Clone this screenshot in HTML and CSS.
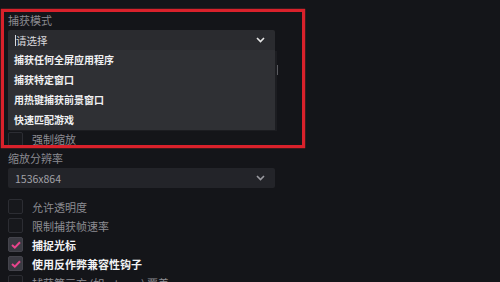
FILE: index.html
```html
<!DOCTYPE html>
<html lang="zh-CN">
<head>
<meta charset="utf-8">
<link rel="stylesheet" href="styles.css">
</head>
<body>
<div class="page">
  <div class="field-label">捕获模式</div>
  <div class="select select-open">
    <span class="select-text"><span class="caret"></span>请选择</span>
    <svg class="chev" width="9" height="6" viewBox="0 0 9 6"><path d="M1 1l3.5 3.5L8 1" fill="none" stroke="#e6e6e6" stroke-width="1.6"/></svg>
  </div>
  <div class="hidden-area"><span class="scroll-tick"></span></div>
  <div class="check-row">
    <span class="box"></span><span class="check-text">强制缩放</span>
  </div>
  <div class="field-label">缩放分辨率</div>
  <div class="select">
    <span class="select-text dim">1536x864</span>
    <svg class="chev" width="9" height="6" viewBox="0 0 9 6"><path d="M1 1l3.5 3.5L8 1" fill="none" stroke="#9a9aa0" stroke-width="1.6"/></svg>
  </div>
  <div class="checks">
    <div class="check-row"><span class="box"></span><span class="check-text">允许透明度</span></div>
    <div class="check-row"><span class="box"></span><span class="check-text">限制捕获帧速率</span></div>
    <div class="check-row on"><span class="box"><svg width="10" height="8" viewBox="0 0 10 8"><path d="M1 4l2.8 2.6L9 1.2" fill="none" stroke="#e8448c" stroke-width="2"/></svg></span><span class="check-text">捕捉光标</span></div>
    <div class="check-row on"><span class="box"><svg width="10" height="8" viewBox="0 0 10 8"><path d="M1 4l2.8 2.6L9 1.2" fill="none" stroke="#e8448c" stroke-width="2"/></svg></span><span class="check-text">使用反作弊兼容性钩子</span></div>
    <div class="check-row"><span class="box"></span><span class="check-text">捕获第三方 (如: steam) 覆盖</span></div>
  </div>

  <ul class="menu">
    <li>捕获任何全屏应用程序</li>
    <li>捕获特定窗口</li>
    <li>用热键捕获前景窗口</li>
    <li>快速匹配游戏</li>
  </ul>
  <div class="highlight"></div>
</div>
</body>
</html>
```

FILE: styles.css
```css
html, body {
  margin: 0;
  padding: 0;
  background: #141519;
  height: 100%;
  overflow: hidden;
}
.page {
  position: relative;
  padding: 10px 0 0 8px;
  font-family: "Noto Sans CJK SC", "Noto Sans", sans-serif;
  font-size: 11px;
  color: #8e8e94;
}
.field-label {
  height: 20px;
  line-height: 20px;
  color: #8a8a90;
  font-size: 11px;
}
.select {
  width: 267px;
  height: 20px;
  background: #232429;
  border-radius: 2px;
  display: flex;
  align-items: center;
  justify-content: space-between;
  padding: 0 10px 0 7px;
  box-sizing: border-box;
}
.select-open {
  background: #2a2b2f;
  border-radius: 2px 2px 0 0;
}
.select-text {
  color: #d8d8dc;
  font-size: 10.5px;
  display: flex;
  align-items: center;
}
.select-text.dim {
  color: #a2a2a8;
}
.caret {
  width: 1px;
  height: 11px;
  background: #d8d8dc;
  margin-right: 0;
}
.hidden-area {
  height: 80px;
  position: relative;
}
.scroll-tick {
  position: absolute;
  left: 268px;
  top: 15px;
  width: 2px;
  height: 10px;
  background: #5a5b60;
}
.check-row {
  height: 19px;
  display: flex;
  align-items: center;
}
.page > .check-row {
  height: 18px;
}
.box {
  width: 13px;
  height: 13px;
  border: 1px solid #2c2d33;
  background: #17181c;
  border-radius: 2px;
  margin-right: 9px;
  display: flex;
  align-items: center;
  justify-content: center;
  flex: none;
}
.check-text {
  color: #8c8c92;
  font-size: 11px;
}
.on .box {
  background: #3a3a42;
  border-color: #44444c;
}
.on .check-text {
  color: #f2f2f4;
  font-weight: bold;
}
.checks {
  margin-top: 9px;
}
.menu {
  position: absolute;
  left: 8px;
  top: 50px;
  width: 267px;
  height: 80px;
  margin: 0;
  padding: 0;
  list-style: none;
  background: #2f3034;
  box-shadow: 2px 1px 0 #1c1d21;
}
.menu li {
  height: 20px;
  line-height: 20px;
  padding-left: 6px;
  color: #f0f0f2;
  font-size: 10px;
  font-weight: bold;
}
.highlight {
  position: absolute;
  left: 1px;
  top: 9px;
  width: 304px;
  height: 139px;
  box-sizing: border-box;
  border: 3px solid #d9212b;
  box-shadow: 0 0 1px #ff3a3a;
}
```
